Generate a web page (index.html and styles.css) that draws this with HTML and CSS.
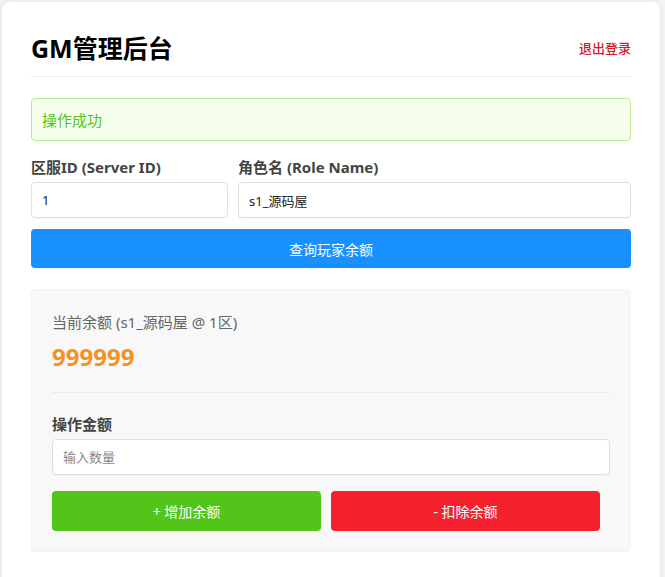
FILE: index.html
```html
<!DOCTYPE html>
<html lang="zh-CN">
<head>
<meta charset="utf-8">
<title>GM管理后台</title>
<link rel="stylesheet" href="styles.css">
</head>
<body>
<div class="card">
  <div class="header">
    <h1 class="title">GM管理后台</h1>
    <a class="logout" href="#">退出登录</a>
  </div>
  <div class="alert">操作成功</div>
  <div class="form-row">
    <div class="field">
      <label class="label">区服ID (Server ID)</label>
      <input class="input" type="text" value="1">
    </div>
    <div class="field">
      <label class="label">角色名 (Role Name)</label>
      <input class="input" type="text" value="s1_源码屋">
    </div>
  </div>
  <button class="btn btn-primary">查询玩家余额</button>
  <div class="panel">
    <div class="balance-label">当前余额 (s1_源码屋 @ 1区)</div>
    <div class="balance">999999</div>
    <div class="divider"></div>
    <label class="label">操作金额</label>
    <input class="input" type="text" placeholder="输入数量">
    <div class="actions">
      <button class="btn btn-success">+ 增加余额</button>
      <button class="btn btn-danger">- 扣除余额</button>
    </div>
  </div>
</div>
</body>
</html>
```
FILE: styles.css
```css
* { box-sizing: border-box; }
html, body { margin: 0; padding: 0; }
body {
  background: #f3f3f3;
  font-family: "Noto Sans", "Noto Sans CJK SC", sans-serif;
  color: #333;
  padding: 2px 5px 0 2px;
}
.card {
  background: #fff;
  border-radius: 8px;
  box-shadow: 0 0 4px rgba(0,0,0,0.08);
  padding: 29px 29px 40px 29px;
  min-height: 600px;
}
.header {
  display: flex;
  justify-content: space-between;
  align-items: center;
  height: 46px;
  padding-bottom: 12px;
  border-bottom: 1px solid #f0f0f0;
  margin-bottom: 21px;
}
.title {
  margin: 0;
  font-size: 25px;
  line-height: 32px;
  font-weight: 700;
  color: #000;
}
.logout {
  color: #cf1c26;
  text-decoration: none;
  font-size: 13px;
  font-weight: 500;
}
.alert {
  display: flex;
  align-items: center;
  height: 43px;
  background: #f6ffed;
  border: 1px solid #b7eb8f;
  border-radius: 4px;
  color: #52c41a;
  font-size: 15px;
  padding: 0 10px;
  margin-bottom: 16px;
}
.form-row {
  display: grid;
  grid-template-columns: 197px 1fr;
  gap: 10px;
  margin-bottom: 11px;
}
.field { display: flex; flex-direction: column; }
.label {
  display: block;
  font-size: 15px;
  font-weight: 700;
  color: #444;
  height: 20px;
  line-height: 20px;
  margin-bottom: 5px;
}
.input {
  display: block;
  width: 100%;
  height: 36px;
  border: 1px solid #e0e0e0;
  border-radius: 4px;
  padding: 0 10px;
  font-size: 13px;
  font-family: "Noto Sans", "Noto Sans CJK SC", sans-serif;
  color: #222;
  background: #fff;
  box-shadow: 0 1px 2px rgba(0,0,0,0.04);
}
.input::placeholder { color: #888; }
.btn {
  display: block;
  border: none;
  border-radius: 4px;
  color: #fff;
  font-size: 14px;
  font-family: "Noto Sans", "Noto Sans CJK SC", sans-serif;
  height: 39px;
  cursor: pointer;
}
.btn-primary {
  width: 100%;
  background: #1890ff;
  margin-bottom: 21px;
}
.panel {
  background: #f8f8f8;
  border: 1px solid #f2f2f2;
  border-radius: 4px;
  padding: 20px;
}
.balance-label {
  font-size: 15px;
  color: #666;
  height: 22px;
  line-height: 22px;
  margin-top: 1px;
}
.balance {
  font-size: 24px;
  font-weight: 700;
  color: #f39322;
  height: 32px;
  line-height: 32px;
  margin-top: 8px;
}
.divider {
  height: 1px;
  background: #ebebeb;
  margin: 19px 0 21px 0;
}
.actions {
  display: flex;
  margin-top: 16px;
}
.actions .btn {
  flex: 1;
  height: 40px;
  margin-right: 10px;
}
.btn-success { background: #52c41a; }
.btn-danger { background: #f5222d; }
```
